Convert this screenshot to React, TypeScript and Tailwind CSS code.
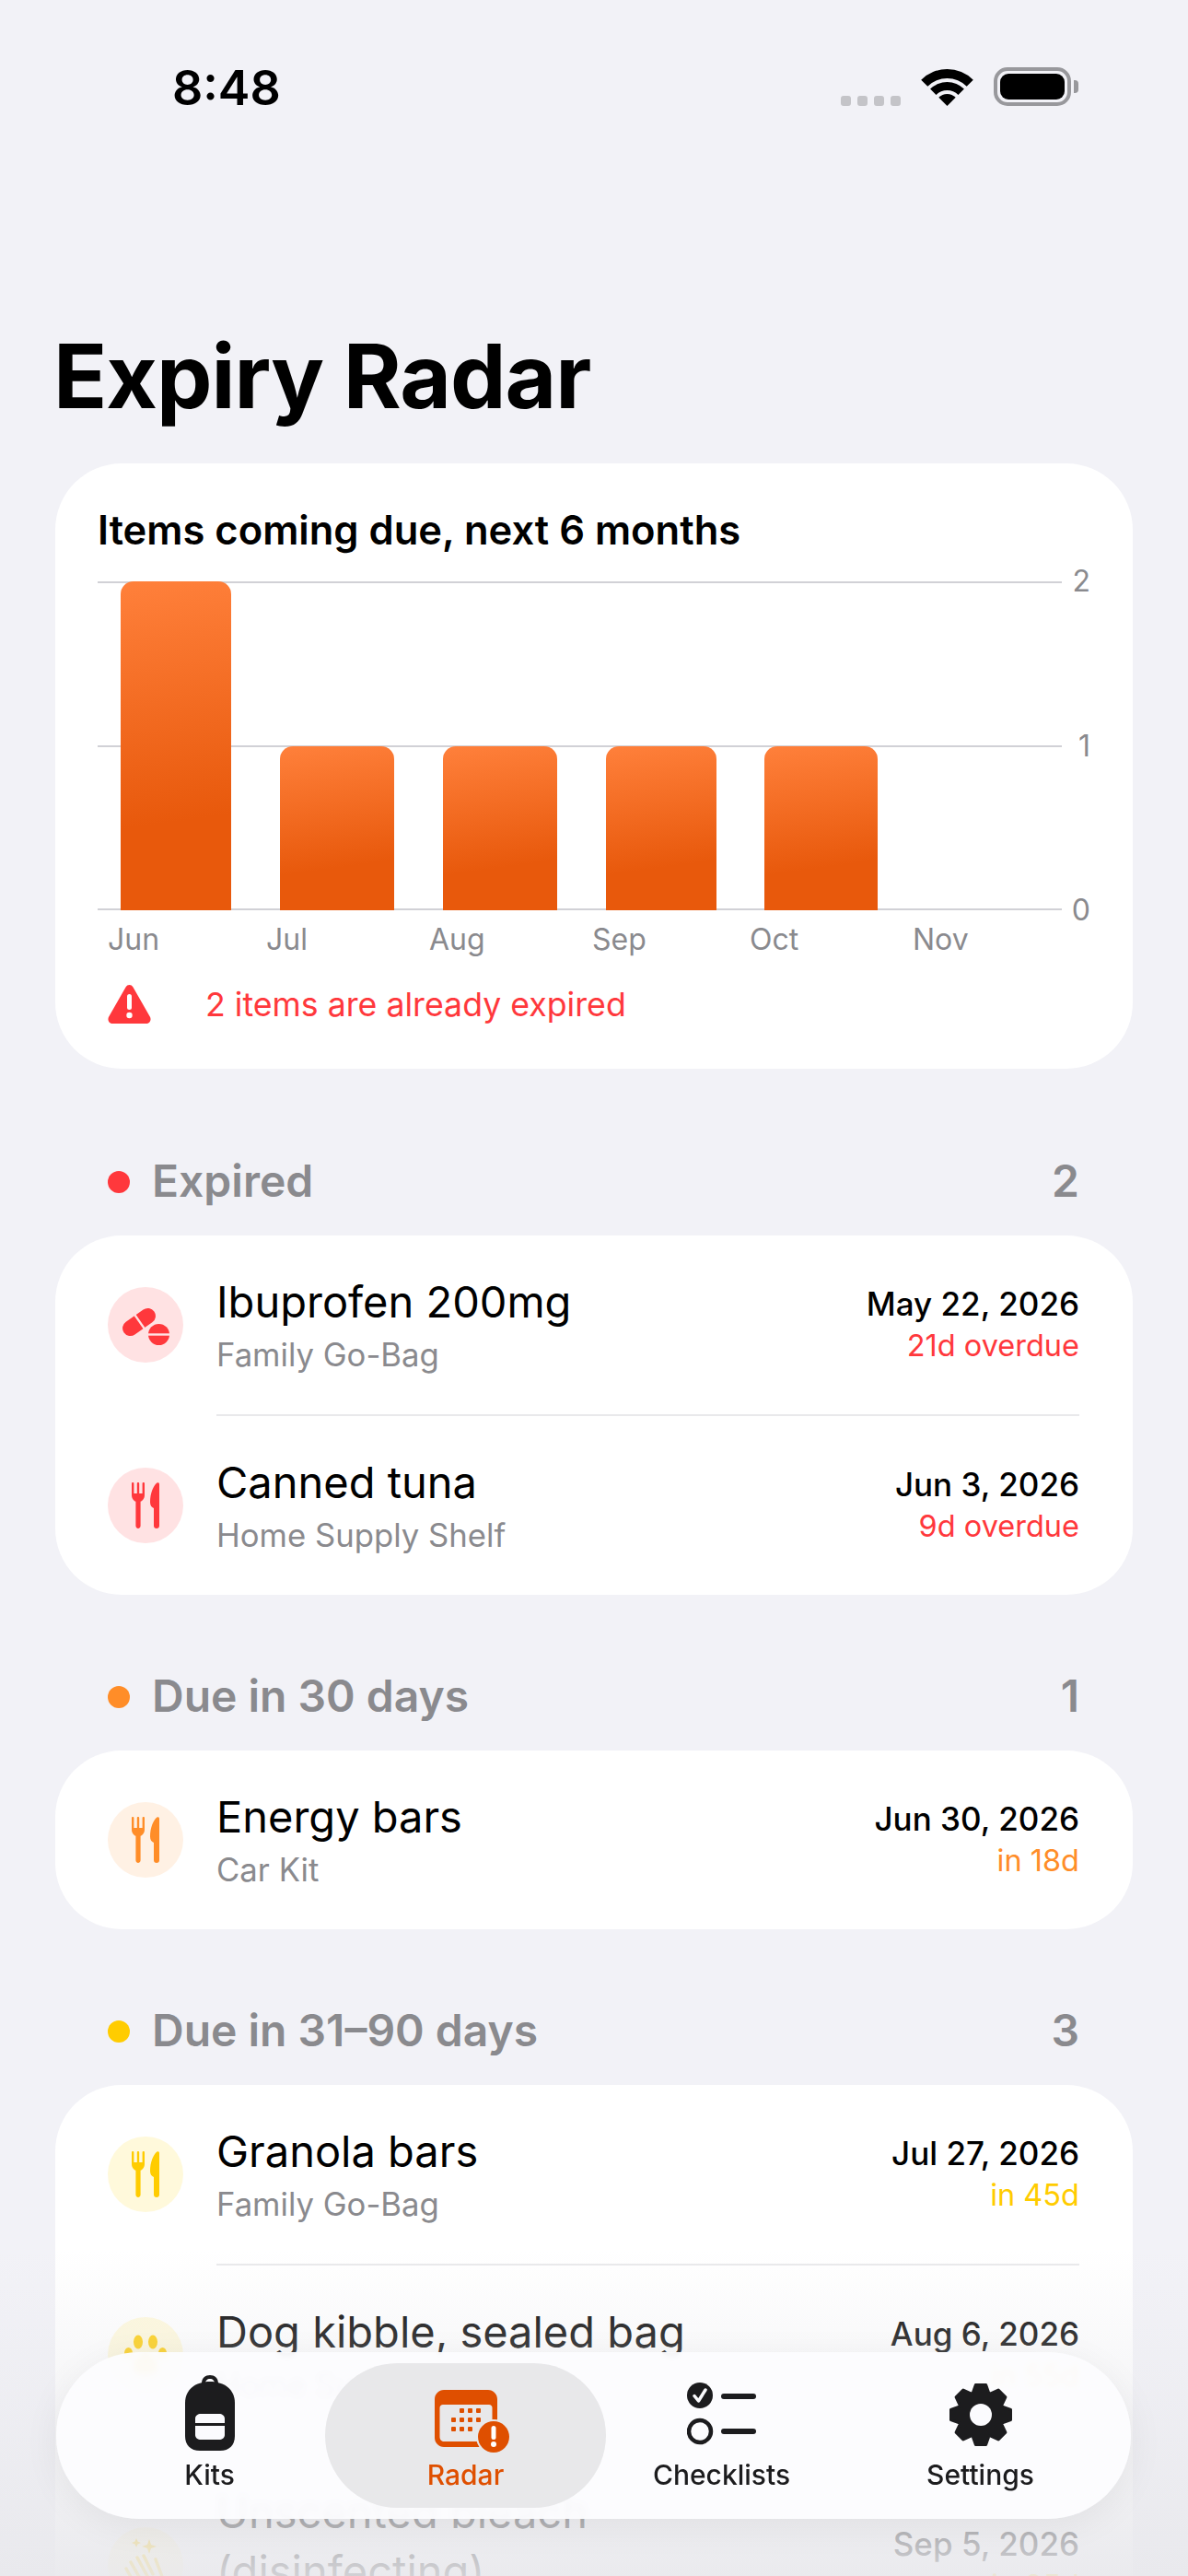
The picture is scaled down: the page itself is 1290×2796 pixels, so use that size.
const GRAY = "text-[#8A8A8E]";

function gearPath() {
  // 8 teeth, computed once
  const cx = 35;
  const cy = 35;
  const pts: string[] = [];
  for (let i = 0; i < 8; i++) {
    const a = (i * Math.PI) / 4 - Math.PI / 2;
    const p = (r: number, d: number) =>
      `${(cx + r * Math.cos(a + d)).toFixed(1)} ${(cy + r * Math.sin(a + d)).toFixed(1)}`;
    pts.push(p(25, -0.36), p(33, -0.17), p(33, 0.17), p(25, 0.36));
  }
  return `M${pts.join("L")}Z`;
}

function ForkKnife({ className }: { className: string }) {
  return (
    <svg viewBox="0 0 30 50" className={`w-[30px] h-[50px] ${className}`} fill="currentColor">
      <path d="M0 1.2C0 .5.5 0 1.2 0S2.4.5 2.4 1.2V12H5.8V1.2C5.8.5 6.3 0 7 0S8.2.5 8.2 1.2V12H11.6V1.2C11.6.5 12.1 0 12.8 0S14 .5 14 1.2V14C14 17.5 11.5 20 9.6 20.8V47C9.6 48.6 8.5 50 7 50S4.4 48.6 4.4 47V20.8C2.5 20 0 17.5 0 14Z" />
      <path d="M30 2V47C30 48.8 28.9 50 27 50S24 48.8 24 47V28C21.5 27 20 25 20 21.5 20 12 23.5 3.5 27.5.6 28.6-.2 30 .5 30 2Z" />
    </svg>
  );
}

function Pills() {
  return (
    <svg viewBox="0 0 51 43" className="w-[51px] h-[43px] text-[#FF383C]" fill="currentColor">
      <g transform="rotate(-35 18 18)">
        <rect x="-2" y="9.5" width="40" height="17" rx="8.5" />
        <rect x="17.5" y="7" width="2.4" height="22" fill="#FFE2E3" />
      </g>
      <circle cx="39.5" cy="31.5" r="11.5" />
      <rect x="27" y="30.3" width="25" height="2.4" fill="#FFE2E3" />
    </svg>
  );
}

function Paw() {
  return (
    <svg viewBox="0 0 46 44" className="w-[46px] h-[44px] text-[#FFCC00]" fill="currentColor">
      <ellipse cx="4.5" cy="20" rx="4.5" ry="6" />
      <ellipse cx="15" cy="8" rx="5" ry="7.5" />
      <ellipse cx="31" cy="8" rx="5" ry="7.5" />
      <ellipse cx="41.5" cy="20" rx="4.5" ry="6" />
      <path d="M23 20C16 20 10 28 10 35 10 41 15 43 23 43S36 41 36 35C36 28 30 20 23 20Z" />
    </svg>
  );
}

function HandsSparkles() {
  return (
    <svg viewBox="0 0 50 60" className="w-[50px] h-[60px] text-[#FFCC00]" fill="none" stroke="currentColor" strokeWidth="3.500" strokeLinecap="round">
      <path d="M4 34L14 52M9 27L21 48M16 22L28 44M23 20L33 40M36 24L42 40C44 46 44 52 42 58" />
      <path d="M15 1L16.500 4.500L20 6L16.500 7.500L15 11L13.500 7.500L10 6L13.500 4.500ZM29 2L31 8L37 10L31 12L29 18L27 12L21 10L27 8Z" fill="currentColor" stroke="none" />
    </svg>
  );
}

function Backpack() {
  return (
    <svg viewBox="0 0 54 82" className="w-[54px] h-[82px]" fill="#1C1C1E">
      <path d="M18 9C18 3 22 0 27 0S36 3 36 9H32C32 6 30 4 27 4S22 6 22 9Z" />
      <path d="M27 7C43 7 54 16 54 30V66C54 76 48 82 38 82H16C6 82 0 76 0 66V30C0 16 11 7 27 7Z" />
      <path d="M17 42H37C40 42 43 44 43 47V52H11V47C11 44 14 42 17 42ZM11 55H43V65C43 68 40 70 37 70H17C14 70 11 68 11 65Z" fill="#FBFBFE" />
    </svg>
  );
}

function CalendarBadge() {
  const dots = [
    [27, 20], [36, 20], [45, 20],
    [18, 30], [27, 30], [36, 30], [45, 30],
    [18, 40], [27, 40], [36, 40],
  ];
  return (
    <svg viewBox="0 0 81 68" className="w-[81px] h-[68px]">
      <path d="M10 0H58C63.5 0 68 4.5 68 10V52C68 57.5 63.5 62 58 62H10C4.5 62 0 57.5 0 52V10C0 4.5 4.500 0 10 0ZM9 16C7 16 5.500 17.500 5.500 19.500V51C5.500 54 7.500 56 10.500 56H57.500C60.500 56 62.500 54 62.500 51V19.500C62.500 17.500 61 16 59 16Z" fill="#DF4F00" fillRule="evenodd" />
      {dots.map(([x, y]) => (
        <rect key={`${x}-${y}`} x={x} y={y} width="5" height="5" rx="1" fill="#DF4F00" />
      ))}
      <circle cx="64" cy="51" r="19" fill="#E8E8EA" />
      <circle cx="64" cy="51" r="17" fill="#DF4F00" />
      <rect x="61.500" y="39" width="5" height="15" rx="2.500" fill="#fff" />
      <circle cx="64" cy="59" r="3" fill="#fff" />
    </svg>
  );
}

function Checklist() {
  return (
    <svg viewBox="0 0 75 68" className="w-[75px] h-[68px]" fill="#1C1C1E">
      <circle cx="14" cy="14" r="14" />
      <path d="M8 14.500L12.500 20L20 8" fill="none" stroke="#FBFBFE" strokeWidth="3.500" strokeLinecap="round" strokeLinejoin="round" />
      <rect x="37" y="12" width="38" height="6" rx="3" />
      <circle cx="14" cy="53" r="12" fill="none" stroke="#1C1C1E" strokeWidth="4.500" />
      <rect x="37" y="50" width="38" height="6" rx="3" />
    </svg>
  );
}

function Gear() {
  return (
    <svg viewBox="0 0 70 70" className="w-[70px] h-[70px]">
      <path d={gearPath()} fill="#1C1C1E" stroke="#1C1C1E" strokeWidth="3" strokeLinejoin="round" />
      <circle cx="35" cy="35" r="12" fill="#FBFBFE" />
    </svg>
  );
}

function StatusBar() {
  return (
    <div className="flex items-start justify-between h-[353px] pt-[68px] pl-[187px] pr-[119px]">
      <span className="text-[52px] leading-[56px] font-semibold text-black">8:48</span>
      <div className="flex items-end gap-[22px] pt-[5px]">
        <div className="flex gap-[7px] ml-[2px]">
          {[0, 1, 2, 3].map((i) => (
            <div key={i} className="w-[11px] h-[11px] rounded-[3px] bg-[#C4C4C8]" />
          ))}
        </div>
        <svg viewBox="0 0 57 41" className="w-[57px] h-[41px]" fill="#000">
          <path d="M.2 12.700A40 40 0 0 1 56.800 12.700L49.700 19.800A30 30 0 0 0 7.300 19.800Z" />
          <path d="M10.100 22.600A26 26 0 0 1 46.900 22.600L40.500 29A17 17 0 0 0 16.500 29Z" />
          <path d="M19.300 31.800A13 13 0 0 1 37.700 31.800L28.500 41Z" />
        </svg>
        <div className="flex items-center gap-[3px]">
          <div className="w-[84px] h-[42px] rounded-[15px] border-[4px] border-[#98989C] p-[3px]">
            <div className="w-full h-full rounded-[9px] bg-black" />
          </div>
          <div className="w-[5px] h-[14px] rounded-r-[4px] bg-[#98989C]" />
        </div>
      </div>
    </div>
  );
}

const bars = [
  { cls: "w-[120px] h-[357px]" },
  { cls: "w-[124px] h-[178px] ml-[53px]" },
  { cls: "w-[124px] h-[178px] ml-[53px]" },
  { cls: "w-[120px] h-[178px] ml-[53px]" },
  { cls: "w-[123px] h-[178px] ml-[52px]" },
];

const months = [
  { label: "Jun", cls: "w-[172px]" },
  { label: "Jul", cls: "w-[177px]" },
  { label: "Aug", cls: "w-[177px]" },
  { label: "Sep", cls: "w-[171px]" },
  { label: "Oct", cls: "w-[177px]" },
  { label: "Nov", cls: "" },
];

function ChartCard() {
  return (
    <div className="mx-[60px] h-[657px] rounded-[72px] bg-white px-[46px] pt-[46px]">
      <div className="text-[43.5px] leading-[52px] font-semibold text-black">Items coming due, next 6 months</div>
      <div className="relative mt-[30px] h-[357px] w-[1047px]">
        <div className="absolute inset-x-0 top-0 h-[2px] bg-[#D1D1D6]" />
        <div className="absolute inset-x-0 top-[178px] h-[2px] bg-[#D1D1D6]" />
        <div className="absolute inset-x-0 bottom-0 h-[2px] bg-[#D1D1D6]" />
        <span className={`absolute -right-[31px] -top-[20px] text-[32px] leading-[40px] ${GRAY}`}>2</span>
        <span className={`absolute -right-[31px] top-[159px] text-[32px] leading-[40px] ${GRAY}`}>1</span>
        <span className={`absolute -right-[31px] -bottom-[20px] text-[32px] leading-[40px] ${GRAY}`}>0</span>
        <div className="relative flex items-end h-full pl-[25px]">
          {bars.map((b, i) => (
            <div
              key={i}
              className={`${b.cls} rounded-t-[14px] bg-linear-[172deg] from-[#FF803B] to-[#E8590C] to-[72%]`}
            />
          ))}
        </div>
      </div>
      <div className={`flex mt-[12px] pl-[11px] text-[32px] leading-[40px] ${GRAY}`}>
        {months.map((m) => (
          <span key={m.label} className={m.cls}>{m.label}</span>
        ))}
      </div>
      <div className="flex items-center mt-[28px] pl-[11px]">
        <svg viewBox="0 0 47 42" className="w-[47px] h-[42px] shrink-0">
          <path d="M19.500 2.500C21.300-.800 25.700-.800 27.500 2.500L45.800 34.500C47.800 38 45.500 42 41.500 42H5.500C1.500 42-.800 38 1.200 34.500Z" fill="#FF383C" />
          <rect x="21" y="10" width="5" height="17" rx="2.500" fill="#fff" />
          <circle cx="23.500" cy="33" r="3.200" fill="#fff" />
        </svg>
        <span className="ml-[59px] text-[35.7px] leading-[44px] text-[#FF383C]">2 items are already expired</span>
      </div>
    </div>
  );
}

type Item = {
  name: string;
  place: string;
  date: string;
  due: string;
  circle: string;
  dueCls: string;
  icon: React.ReactNode;
};

function Row({ item, last }: { item: Item; last: boolean }) {
  return (
    <>
      <div className="flex items-center py-[44px] pl-[57px] pr-[58px]">
        <div className={`w-[82px] h-[82px] shrink-0 rounded-full flex items-center justify-center ${item.circle}`}>
          {item.icon}
        </div>
        <div className="ml-[36px] flex-1 min-w-0">
          <div className="max-w-[620px] -mt-[4px] mb-[4px] text-[47px] leading-[64px] text-black">{item.name}</div>
          <div className={`text-[34.700px] leading-[42px] ${GRAY}`}>{item.place}</div>
        </div>
        <div className="ml-[20px] shrink-0 text-right">
          <div className="-mt-[2px] text-[35px] leading-[44px] font-medium text-black">{item.date}</div>
          <div className={`text-[32.500px] leading-[40px] mt-[4px] ${item.dueCls}`}>{item.due}</div>
        </div>
      </div>
      {!last && <div className="h-[2px] bg-[#E9E9EB] ml-[175px] mr-[58px]" />}
    </>
  );
}

const red = { circle: "bg-[#FFE2E3]", dueCls: "text-[#FF383C]" };
const orange = { circle: "bg-[#FFF1E4]", dueCls: "text-[#FF8D28]" };
const yellow = { circle: "bg-[#FFF9DB]", dueCls: "text-[#FFCC00]" };

const sections: { title: string; dot: string; items: Item[] }[] = [
  {
    title: "Expired",
    dot: "bg-[#FF383C]",
    items: [
      { name: "Ibuprofen 200mg", place: "Family Go-Bag", date: "May 22, 2026", due: "21d overdue", ...red, icon: <Pills /> },
      { name: "Canned tuna", place: "Home Supply Shelf", date: "Jun 3, 2026", due: "9d overdue", ...red, icon: <ForkKnife className="text-[#FF383C]" /> },
    ],
  },
  {
    title: "Due in 30 days",
    dot: "bg-[#FF8D28]",
    items: [
      { name: "Energy bars", place: "Car Kit", date: "Jun 30, 2026", due: "in 18d", ...orange, icon: <ForkKnife className="text-[#FF8D28]" /> },
    ],
  },
  {
    title: "Due in 31–90 days",
    dot: "bg-[#FFCC00]",
    items: [
      { name: "Granola bars", place: "Family Go-Bag", date: "Jul 27, 2026", due: "in 45d", ...yellow, icon: <ForkKnife className="text-[#FFCC00]" /> },
      { name: "Dog kibble, sealed bag", place: "Home Supply Shelf", date: "Aug 6, 2026", due: "in 55d", ...yellow, icon: <Paw /> },
      { name: "Unscented bleach (disinfecting)", place: "Home Supply Shelf", date: "Sep 5, 2026", due: "in 85d", ...yellow, icon: <HandsSparkles /> },
    ],
  },
];

function TabBar() {
  return (
    <div className="absolute left-[61px] top-[2553px] w-[1167px] h-[181px] rounded-[90px] bg-[#FCFCFE]/95 backdrop-blur-[3px] shadow-[0_8px_40px_rgba(0,0,0,0.06)] flex items-center pl-[12px]">
      <div className="w-[280px] h-[157px] shrink-0 pl-[29px] flex flex-col items-center justify-end pb-[18px] text-[30px] leading-[36px] font-medium text-[#1C1C1E]">
        <Backpack />
        <span className="mt-[8px]">Kits</span>
      </div>
      <div className="w-[305px] h-[157px] shrink-0 rounded-full bg-[#E8E8EA] flex flex-col items-center justify-end pb-[18px] text-[30px] leading-[36px] font-medium text-[#DF4F00]">
        <div className="pl-[14px]"><CalendarBadge /></div>
        <span className="mt-[6px]">Radar</span>
      </div>
      <div className="w-[251px] h-[157px] shrink-0 flex flex-col items-center justify-end pb-[18px] text-[30px] leading-[36px] font-medium text-[#1C1C1E]">
        <Checklist />
        <span className="mt-[14px]">Checklists</span>
      </div>
      <div className="w-[311px] h-[157px] shrink-0 flex flex-col items-center justify-end pb-[18px] text-[30px] leading-[36px] font-medium text-[#1C1C1E]">
        <Gear />
        <span className="mt-[12px]">Settings</span>
      </div>
    </div>
  );
}

export default function App() {
  return (
    <div className="relative w-[1290px] h-[2796px] overflow-hidden bg-[#F2F2F7] font-['Inter',sans-serif]">
      <StatusBar />
      <h1 className="pl-[58px] text-[96px] leading-[110px] font-bold tracking-[-1px] text-black mb-[40px]">Expiry Radar</h1>
      <ChartCard />
      <div className="pt-[12px]">
        {sections.map((s) => (
          <div key={s.title} className="mt-[82px]">
            <div className="flex items-center h-[58px] pl-[117px] pr-[118px] mb-[29px]">
              <div className={`w-[24px] h-[24px] rounded-full ${s.dot}`} />
              <span className={`ml-[24px] -mt-[2px] text-[48px] leading-[58px] font-semibold ${GRAY}`}>{s.title}</span>
              <span className={`ml-auto -mt-[2px] text-[48px] leading-[58px] font-semibold ${GRAY}`}>{s.items.length}</span>
            </div>
            <div className="mx-[60px] rounded-[72px] bg-white">
              {s.items.map((it, i) => (
                <Row key={it.name} item={it} last={i === s.items.length - 1} />
              ))}
            </div>
          </div>
        ))}
      </div>
      <div className="absolute inset-x-0 bottom-0 h-[354px] bg-linear-to-b from-[#E8E8EC]/0 to-[#E8E8EC]/90 pointer-events-none" />
      <TabBar />
    </div>
  );
}
